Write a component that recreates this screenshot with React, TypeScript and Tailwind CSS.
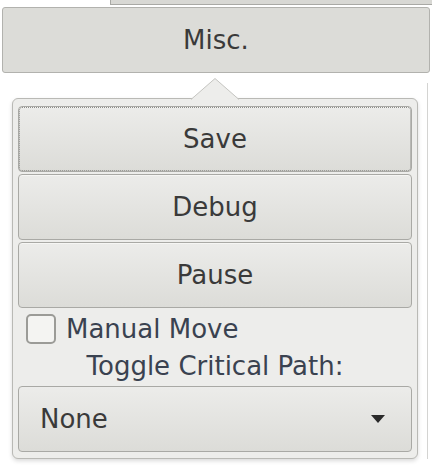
import React from 'react';

const font = { fontFamily: '"DejaVu Sans", sans-serif' };

const Btn = ({ label, focused }: { label: string; focused?: boolean }) => (
  <button
    className="h-[66px] w-full rounded-[4px] border border-[#a9a9a5] bg-gradient-to-b from-[#ececea] to-[#dcdcd8] text-[26px] text-[#3a3a3a] shadow-[inset_0_1px_0_#f6f6f4]"
  >
    <span
      className={
        focused
          ? 'flex h-full w-full items-center justify-center rounded-[3px] border border-dotted border-[#8d8d8a]'
          : 'flex h-full w-full items-center justify-center'
      }
    >
      {label}
    </span>
  </button>
);

const App = () => {
  return (
    <div className="relative h-[476px] w-[432px] overflow-hidden bg-white" style={font}>
      <div className="flex h-[5px]">
        <div className="w-[110px] bg-white" />
        <div className="flex-1 border-b border-l border-[#a9a9a5] bg-[#d8d8d4]" />
      </div>
      <div className="mx-[2px] mt-[2px] flex h-[66px] items-center justify-center rounded-[3px] border border-[#b2b2ae] bg-[#dcdcd8] text-[26px] text-[#3a3a3a]">
        Misc.
      </div>

      <div className="flex">
        <div className="relative ml-[12px] mt-[25px] w-[406px] rounded-[6px] border border-[#b9b9b5] bg-[#ededeb] px-[5px] pb-[6px] pt-[7px] shadow-[0_2px_4px_rgba(0,0,0,0.15)]">
          <svg
            className="absolute left-[178px] top-[-21px]"
            width="48"
            height="22"
            viewBox="0 0 48 22"
          >
            <path d="M0 21.5 L24 0.5 L48 21.5" fill="#ededeb" stroke="#c4c4c0" strokeWidth="1" />
          </svg>
          <div className="flex flex-col gap-[2px]">
            <Btn label="Save" focused />
            <Btn label="Debug" />
            <Btn label="Pause" />
          </div>
          <div className="mt-[6px] flex items-center gap-[10px] pl-[8px]">
            <div className="h-[30px] w-[30px] rounded-[5px] border-2 border-[#9b9b97] bg-[#f4f4f2]" />
            <span className="text-[26px] leading-[30px] text-[#3a4250]">Manual Move</span>
          </div>
          <div className="mt-[4px] text-center text-[26px] leading-[36px] text-[#3a4250]">
            Toggle Critical Path:
          </div>
          <div className="mt-[2px] flex h-[66px] items-center justify-between rounded-[4px] border border-[#a9a9a5] bg-gradient-to-b from-[#ececea] to-[#dcdcd8] pl-[21px] pr-[26px] text-[26px] text-[#3a3a3a]">
            <span>None</span>
            <svg width="14" height="8" viewBox="0 0 14 8">
              <path d="M0 0 L14 0 L7 8 Z" fill="#2a2a2a" />
            </svg>
          </div>
        </div>
        <div className="ml-[9px] mt-[10px] w-px bg-[#d4d4d2]" />
      </div>
    </div>
  );
};

export default App;
